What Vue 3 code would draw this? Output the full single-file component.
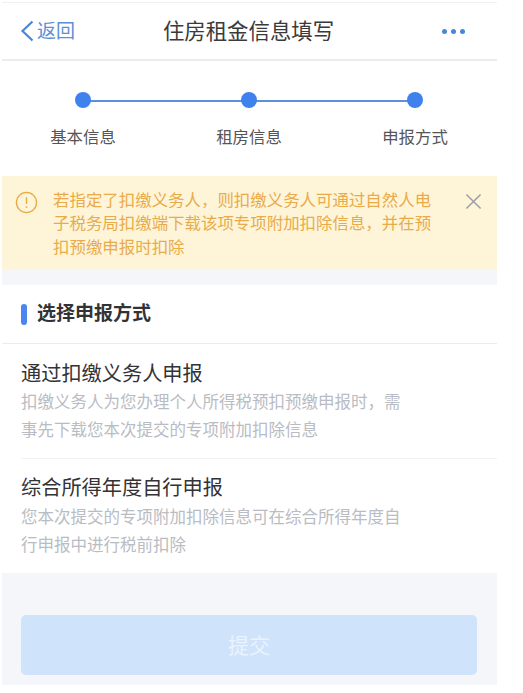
<script setup>
const steps = ['基本信息', '租房信息', '申报方式']
const options = [
  { title: '通过扣缴义务人申报', lines: ['扣缴义务人为您办理个人所得税预扣预缴申报时，需', '事先下载您本次提交的专项附加扣除信息'] },
  { title: '综合所得年度自行申报', lines: ['您本次提交的专项附加扣除信息可在综合所得年度自', '行申报中进行税前扣除'] }
]
</script>

<template>
  <div class="page">
    <header class="nav">
      <div class="back">
        <svg class="chevron" viewBox="0 0 14 22" width="14" height="22"><path d="M12.5 1.5 L2.5 11 L12.5 20.5" fill="none" stroke="#4a86d8" stroke-width="2.2" /></svg>
        <span class="back-text">返回</span>
      </div>
      <h1 class="nav-title">住房租金信息填写</h1>
      <div class="more"><i></i><i></i><i></i></div>
    </header>

    <section class="steps">
      <div class="track">
        <div class="line"></div>
        <div v-for="s in steps" :key="s" class="step">
          <span class="dot"></span>
          <span class="step-label">{{ s }}</span>
        </div>
      </div>
    </section>

    <section class="notice">
      <svg class="warn" viewBox="0 0 24 24" width="23" height="23">
        <circle cx="12" cy="12" r="10.5" fill="none" stroke="#e8ab45" stroke-width="1.4" />
        <path d="M12 6.5 V13.5" stroke="#e8ab45" stroke-width="1.5" />
        <circle cx="12" cy="16.8" r="1" fill="#e8ab45" />
      </svg>
      <p class="notice-text">若指定了扣缴义务人，则扣缴义务人可通过自然人电<br />子税务局扣缴端下载该项专项附加扣除信息，并在预<br />扣预缴申报时扣除</p>
      <svg class="close" viewBox="0 0 18 18" width="17" height="17"><path d="M1.5 1.5 L16.5 16.5 M16.5 1.5 L1.5 16.5" stroke="#9a9fa6" stroke-width="1.6" fill="none" /></svg>
    </section>

    <div class="spacer"></div>

    <section class="panel">
      <div class="panel-head">
        <span class="bar"></span>
        <h2>选择申报方式</h2>
      </div>
      <div class="options">
        <div v-for="o in options" :key="o.title" class="option">
          <div class="option-title">{{ o.title }}</div>
          <p v-for="l in o.lines" :key="l" class="option-desc">{{ l }}</p>
        </div>
      </div>
    </section>

    <footer class="foot">
      <button class="submit" type="button">提交</button>
    </footer>
  </div>
</template>

<style>
html, body { margin: 0; background: #fff; }
</style>

<style scoped>
.page {
  width: 495px;
  margin-left: 2px;
  padding-top: 2px;
  background: #fff;
  font-family: "Noto Sans CJK SC", "Noto Sans", sans-serif;
}
.nav {
  height: 56px;
  border-top: 1px solid #f1f1f2;
  border-bottom: 2px solid #ececee;
  position: relative;
  display: flex;
  align-items: center;
  justify-content: space-between;
}
.back {
  display: flex;
  align-items: center;
  gap: 3px;
  margin-left: 18px;
  color: #5b90d6;
  font-size: 19px;
}
.back-text { padding-bottom: 3px; }
.chevron { display: block; }
.nav-title {
  position: absolute;
  left: 0;
  right: 0;
  margin: 0;
  padding: 0 2px 3px 0;
  text-align: center;
  font-size: 21.4px;
  font-weight: 400;
  color: #3a3a3c;
}
.more { display: flex; gap: 4px; margin-right: 32px; }
.more i { width: 5px; height: 5px; border-radius: 50%; background: #4a86d8; }
.steps { height: 115px; }
.track {
  position: relative;
  display: flex;
  justify-content: space-between;
  width: 416px;
  margin-left: 39px;
  padding-top: 31px;
}
.line {
  position: absolute;
  left: 42px;
  right: 42px;
  top: 39px;
  height: 2px;
  background: #5c8fdc;
}
.step {
  position: relative;
  width: 84px;
  display: flex;
  flex-direction: column;
  align-items: center;
}
.dot { width: 16px; height: 16px; border-radius: 50%; background: #3f82ee; }
.step-label {
  margin-top: 17px;
  font-size: 16.4px;
  line-height: 22px;
  color: #555558;
}
.notice {
  height: 93px;
  background: #fef5d9;
  display: flex;
  box-sizing: border-box;
  padding-top: 12px;
}
.warn { margin: 3px 0 0 13px; flex: none; }
.notice-text {
  margin: 0 0 0 15px;
  width: 385px;
  font-size: 16.45px;
  line-height: 23.4px;
  color: #e9ab4a;
  white-space: nowrap;
}
.close { margin: 5px 0 0 27px; flex: none; }
.spacer { height: 16px; background: #f5f6fa; }
.panel { background: #fff; }
.panel-head {
  height: 58px;
  border-bottom: 1px solid #ececee;
  display: flex;
  align-items: center;
  gap: 10px;
  padding-left: 19px;
}
.bar { width: 6px; height: 21px; border-radius: 3px; background: #4a86ee; }
.panel-head h2 {
  margin: 0;
  padding-bottom: 6px;
  font-size: 19px;
  font-weight: 700;
  color: #333336;
}
.options { padding-left: 19px; }
.option { height: 114px; box-sizing: border-box; padding-top: 14px; }
.option .option-title { margin-bottom: 1px; }
.option + .option { height: 115px; border-top: 1px solid #f2f2f3; padding-top: 13px; }
.option + .option .option-title { margin-bottom: 2px; }
.option-title {
  font-size: 20.2px;
  line-height: 29px;
  color: #333336;
}
.option-desc {
  margin: 0;
  font-size: 16.5px;
  line-height: 27.6px;
  color: #b9bcc2;
  white-space: nowrap;
}
.foot {
  height: 112px;
  background: #f5f6fa;
  box-sizing: border-box;
  padding: 42px 20px 0 19px;
}
.submit {
  display: block;
  width: 100%;
  height: 60px;
  border: 0;
  border-radius: 5px;
  background: #cfe4fb;
  color: #eaf3fe;
  font-family: inherit;
  font-size: 21px;
  padding-bottom: 4px;
}
</style>
